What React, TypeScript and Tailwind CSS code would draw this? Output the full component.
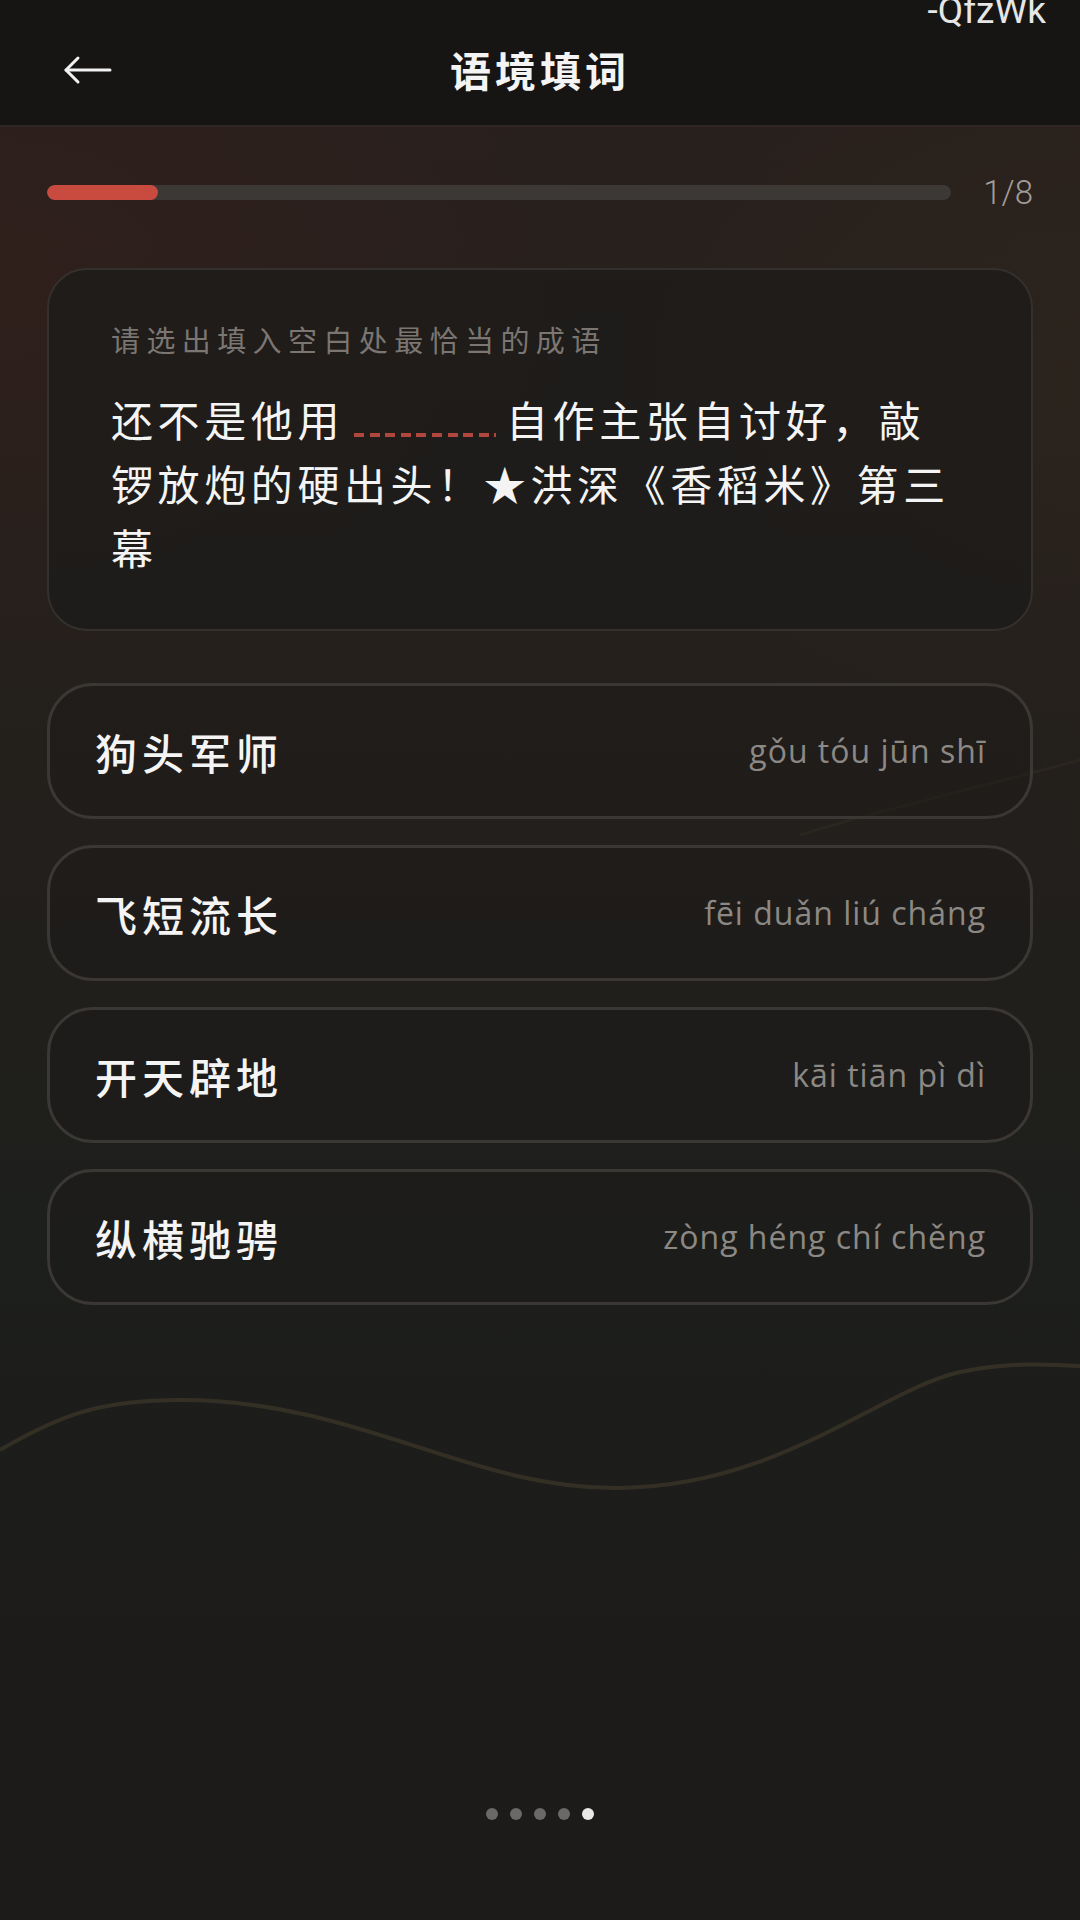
import React from 'react'

const options = [
  { word: '狗头军师', pinyin: 'gǒu tóu jūn shī' },
  { word: '飞短流长', pinyin: 'fēi duǎn liú cháng' },
  { word: '开天辟地', pinyin: 'kāi tiān pì dì' },
  { word: '纵横驰骋', pinyin: 'zòng héng chí chěng' },
]

const cjk = "font-['Noto_Sans_CJK_SC','Noto_Sans',sans-serif]"

export default function App() {
  return (
    <div className={`relative w-[1080px] h-[1920px] overflow-hidden bg-[#1c1b1a] ${cjk}`}>
      {/* 背景 */}
      <div className="absolute inset-0 bg-[linear-gradient(180deg,#2a201d_0%,#26201c_25%,#211f1c_50%,#1d1f1c_65%,#1c1b1a_85%,#1c1b1a_100%)]" />
      <div className="absolute inset-0 bg-[radial-gradient(ellipse_600px_400px_at_0%_15%,rgba(70,30,25,0.25),transparent)]" />
      <div className="absolute inset-0 bg-[radial-gradient(ellipse_500px_400px_at_100%_20%,rgba(60,48,30,0.22),transparent)]" />
      <svg className="absolute left-0 top-0" width="1080" height="1920" viewBox="0 0 1080 1920" fill="none">
        <path d="M0 1450 C 60 1415, 100 1400, 180 1400 C 360 1400, 470 1490, 620 1488 C 780 1486, 880 1390, 960 1372 C 1010 1362, 1050 1364, 1080 1366" stroke="#3b3428" strokeWidth="4" opacity="0.8" />
        <path d="M800 835 C 880 810, 970 790, 1080 760" stroke="#3a3428" strokeWidth="3" opacity="0.3" />
      </svg>

      <div className="relative flex flex-col">
        {/* 顶部栏 */}
        <div className="relative h-[127px] bg-[#161514] border-b-2 border-[#2e2724] flex items-center px-[62px] pt-[14px]">
          <svg width="52" height="30" viewBox="0 0 52 30" fill="none" stroke="#f2f2f2" strokeWidth="3" strokeLinecap="round" strokeLinejoin="round">
            <path d="M4 15 H48" />
            <path d="M16 3 L4 15 L16 27" />
          </svg>
          <div className="flex-1 text-center text-[41px] font-bold tracking-[4px] text-[#f4f4f4] pr-[52px]">语境填词</div>
          <div className="absolute right-[34px] top-[-13px] text-[37px] text-[#e6e6e6] font-['Roboto',sans-serif] leading-[48px]">-QfzWk</div>
        </div>

        {/* 进度条 */}
        <div className="flex items-center px-[47px] mt-[49px]">
          <div className="flex-1 h-[15px] rounded-full bg-[#3c3836] overflow-hidden">
            <div className="w-[111px] h-full rounded-full bg-[#c94a3f]" />
          </div>
          <div className="ml-[32px] text-[33px] text-[#a09d9a] font-['Roboto',sans-serif] font-light leading-none">1/8</div>
        </div>

        {/* 题目卡片 */}
        <div className="mx-[47px] mt-[59px] rounded-[40px] border-2 border-[#34302d] bg-[#1e1c1b]/90 pl-[62px] pr-[68px] pt-[53px] pb-[50px]">
          <div className="text-[29px] leading-[32px] tracking-[6.4px] text-[#7b7672]">请选出填入空白处最恰当的成语</div>
          <div className="mt-[32px] text-[42px] leading-[64px] tracking-[4.6px] text-[#f4f4f4]">
            还不是他用
            <span className="inline-block align-baseline mx-[10px] w-[142px] h-[4px] bg-[repeating-linear-gradient(90deg,#b0463c_0_10px,transparent_10px_15.6px)]" />
            自作主张自讨好，敲锣放炮的硬出头！★洪深《香稻米》第三幕
          </div>
        </div>

        {/* 选项 */}
        <div className="mx-[47px] mt-[52px] flex flex-col gap-[26px]">
          {options.map(o => (
            <div
              key={o.word}
              className="h-[136px] rounded-[46px] border-[3px] border-[#3a3734] bg-[#1c1a19]/40 flex items-center justify-between pl-[45px] pr-[44px]"
            >
              <span className="text-[42px] font-medium tracking-[5px] text-[#f4f4f4]">{o.word}</span>
              <span className="text-[32px] text-[#8c8884] font-['Open_Sans','Noto_Sans',sans-serif] tracking-[1px]">{o.pinyin}</span>
            </div>
          ))}
        </div>

        {/* 分页点 */}
        <div className="mt-[503px] flex justify-center gap-[12px]">
          {[0, 1, 2, 3, 4].map(i => (
            <div key={i} className={`w-[12px] h-[12px] rounded-full ${i === 4 ? 'bg-[#e8e8e8]' : 'bg-[#6a6968]'}`} />
          ))}
        </div>
      </div>
    </div>
  )
}
